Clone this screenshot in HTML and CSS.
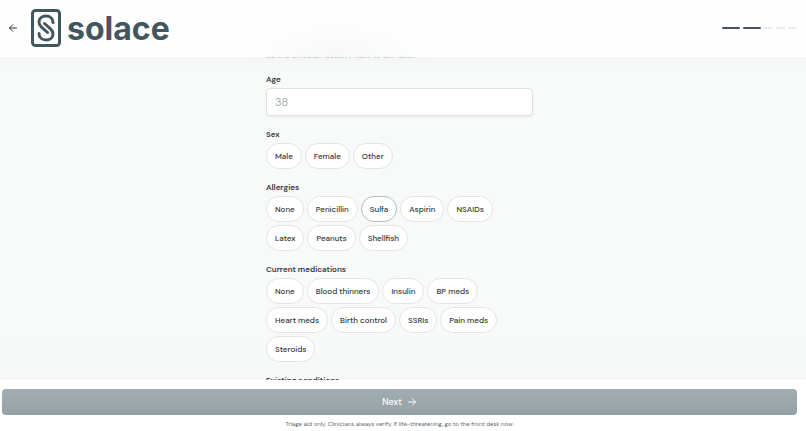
FILE: index.html
```html
<!DOCTYPE html>
<html lang="en">
<head>
  <meta charset="UTF-8">
  <meta name="viewport" content="width=device-width, initial-scale=1.0">
  <title>Solace</title>
  <link rel="stylesheet" href="styles.css">
</head>
<body>
  <header class="topbar">
    <button class="back" type="button" aria-label="Back">
      <svg width="10" height="10" viewBox="0 0 10 10"><path d="M8.500 5h-7M4.800 1.700L1.500 5l3.300 3.300"/></svg>
    </button>
    <div class="brand">
      <svg class="brand-mark" width="30" height="38" viewBox="0 0 30 38">
        <rect x="1.500" y="1.500" width="27" height="35" rx="3"/>
        <path d="M22 13.500C22 9.500 19 7 15 7S8 9.500 8 13c0 2.300 1 3.800 2.500 5.200l6 5.300"/>
        <path d="M13.500 14.500l6 5.300C21 21.200 22 22.700 22 25c0 3.500-3 6-7 6s-7-2.500-7-6.500"/>
      </svg>
      <span class="brand-name">solace</span>
    </div>
    <div class="steps">
      <span class="step done"></span>
      <span class="step done"></span>
      <span class="step"></span>
      <span class="step"></span>
      <span class="step"></span>
    </div>
  </header>

  <main class="content">
    <form class="intake" id="intake">
      <p class="hint">So the clinician doesn't have to ask later.</p>

      <div class="field">
        <label for="age">Age</label>
        <input class="age" id="age" type="text" inputmode="numeric" placeholder="38">
      </div>

      <div class="field" role="group" aria-labelledby="sex">
        <span class="title" id="sex">Sex</span>
        <div class="chips">
          <button type="button" class="chip">Male</button>
          <button type="button" class="chip">Female</button>
          <button type="button" class="chip">Other</button>
        </div>
      </div>

      <div class="field" role="group" aria-labelledby="allergies">
        <span class="title" id="allergies">Allergies</span>
        <div class="chips">
          <button type="button" class="chip">None</button>
          <button type="button" class="chip">Penicillin</button>
          <button type="button" class="chip active">Sulfa</button>
          <button type="button" class="chip">Aspirin</button>
          <button type="button" class="chip">NSAIDs</button>
          <button type="button" class="chip">Latex</button>
          <button type="button" class="chip">Peanuts</button>
          <button type="button" class="chip">Shellfish</button>
        </div>
      </div>

      <div class="field" role="group" aria-labelledby="meds">
        <span class="title" id="meds">Current medications</span>
        <div class="chips">
          <button type="button" class="chip">None</button>
          <button type="button" class="chip">Blood thinners</button>
          <button type="button" class="chip">Insulin</button>
          <button type="button" class="chip">BP meds</button>
          <button type="button" class="chip">Heart meds</button>
          <button type="button" class="chip">Birth control</button>
          <button type="button" class="chip">SSRIs</button>
          <button type="button" class="chip">Pain meds</button>
          <button type="button" class="chip">Steroids</button>
        </div>
      </div>

      <div class="field">
        <span class="title">Existing conditions</span>
      </div>
    </form>
  </main>

  <footer class="actions">
    <button class="next" type="submit" form="intake">
      Next
      <svg width="10" height="10" viewBox="0 0 10 10"><path d="M1.500 5h7M5.200 1.700L8.500 5 5.200 8.300"/></svg>
    </button>
    <p class="note">Triage aid only. Clinicians always verify. If life-threatening, go to the front desk now.</p>
  </footer>
</body>
</html>
```

FILE: styles.css
```css
* {
  box-sizing: border-box;
}

body {
  display: flex;
  flex-direction: column;
  height: 100vh;
  margin: 0;
  overflow: hidden;
  background: #fff;
  color: #303638;
  font-family: "DM Sans", Inter, sans-serif;
  font-size: 8px;
  line-height: 12px;
}

button,
input {
  font-family: inherit;
}

svg {
  fill: none;
  stroke: currentColor;
  stroke-linecap: round;
  stroke-linejoin: round;
}

/* Top bar */
.topbar {
  display: flex;
  flex: none;
  align-items: center;
  height: 57px;
  padding: 0 9px 1px 7px;
  background: radial-gradient(ellipse 90px 40px at 42% 100%, #f8f8f8, #fefefe);
}

.back {
  display: flex;
  padding: 1px;
  border: 0;
  background: none;
  color: #303638;
  cursor: pointer;
}

.brand {
  display: flex;
  align-items: center;
  gap: 6px;
  margin-left: 12px;
  color: #42565e;
}

.brand-mark {
  stroke-width: 3;
}

.brand-name {
  padding-top: 2px;
  font-family: Inter, sans-serif;
  font-size: 32px;
  font-weight: 700;
  line-height: 38px;
}

.steps {
  display: flex;
  gap: 3px;
  margin-left: auto;
}

.step {
  width: 9px;
  height: 2px;
  border-radius: 1px;
  background: #e9ebec;
}

.step.done {
  width: 18px;
  background: #42565e;
}

/* Form */
.content {
  flex: 1;
  min-height: 0;
  padding: 0 7px 0 0;
  overflow: hidden;
  background: linear-gradient(#f4f6f6, #f8faf9 12px, #f8faf9 85%, #f6f7f7);
}

.intake {
  display: flex;
  flex-direction: column;
  gap: 12px;
  max-width: 267px;
  margin: -8px auto 0;
}

.hint {
  margin: 0;
  color: #b9bdbf;
}

.field {
  display: flex;
  flex-direction: column;
  gap: 3px;
}

.field label,
.title {
  font-weight: 600;
}

.age {
  width: 100%;
  height: 28px;
  padding: 0 8px;
  border: 1px solid #dfe3e4;
  border-radius: 4px;
  background: #fff;
  box-shadow: 0 1px 2px rgba(0, 0, 0, 0.06);
  font-size: 11px;
}

.age::placeholder {
  color: #a9aeb5;
}

.chips {
  display: flex;
  flex-wrap: wrap;
  gap: 3px;
  max-width: 240px;
}

.chip {
  height: 26px;
  padding: 0 8px;
  border: 1px solid #e2e5e5;
  border-radius: 13px;
  background: #fff;
  color: #303638;
  font-size: 8px;
  font-weight: 500;
  cursor: pointer;
}

.chip.active {
  border-color: #b5bdc0;
}

/* Bottom bar */
.actions {
  display: flex;
  flex: none;
  flex-direction: column;
  gap: 3px;
  padding: 9px 9px 1px 2px;
  background: #fff;
}

.next {
  display: flex;
  align-items: center;
  justify-content: center;
  gap: 5px;
  height: 26px;
  border: 0;
  border-radius: 4px;
  background: linear-gradient(#a1aeb1, #96a1a4);
  color: #fff;
  font-size: 9px;
  font-weight: 500;
  cursor: pointer;
}

.note {
  margin: 0;
  color: #62696c;
  font-size: 6px;
  text-align: center;
}
```
